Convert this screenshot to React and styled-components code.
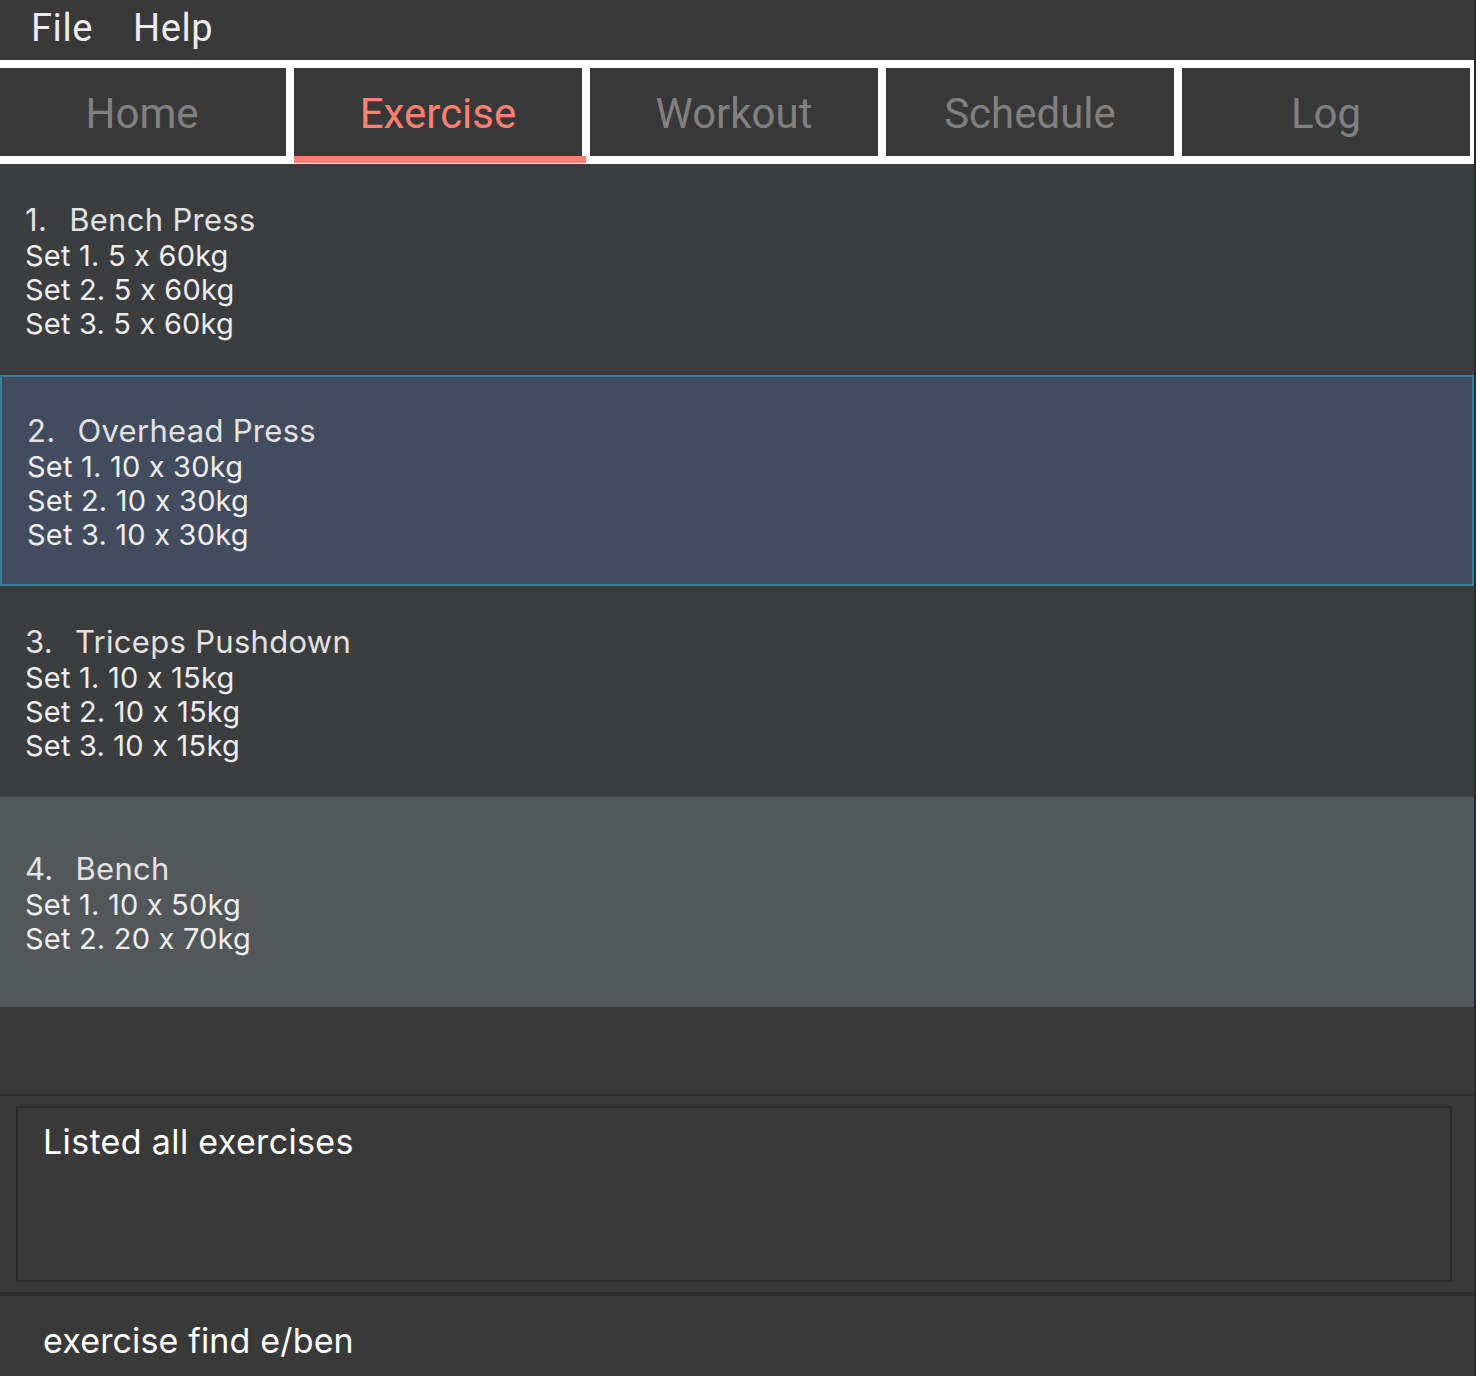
import React from 'react';
import styled, { createGlobalStyle } from 'styled-components';

const GlobalStyle = createGlobalStyle`
  html, body {
    margin: 0;
    padding: 0;
    background: #262a31;
  }
  * {
    box-sizing: border-box;
  }
`;

const Window = styled.div`
  width: 1474px;
  height: 1376px;
  display: flex;
  flex-direction: column;
  overflow: hidden;
  background: #393939;
  font-feature-settings: 'calt' 0;
`;

const MenuBar = styled.div`
  height: 60px;
  display: flex;
  align-items: center;
  gap: 40px;
  padding: 0 0 5px 31px;
  background: #393939;
`;

const MenuItem = styled.span`
  font-family: Roboto, "Liberation Sans", sans-serif;
  font-size: 38px;
  letter-spacing: 0.6px;
  color: #ececec;
`;

const TabBar = styled.div`
  display: flex;
  gap: 8px;
  margin-left: -2px;
  padding: 8px 4px 8px 0;
  background: #ffffff;
`;

const Tab = styled.div`
  position: relative;
  flex: 1;
  height: 88px;
  display: flex;
  align-items: center;
  justify-content: center;
  padding-top: 3px;
  background: #383838;
  font-family: Roboto, "Liberation Sans", sans-serif;
  font-size: 42px;
  color: ${p => (p.active ? '#fa8072' : '#808080')};

  &::after {
    content: '';
    display: ${p => (p.active ? 'block' : 'none')};
    position: absolute;
    left: 0;
    right: -4px;
    bottom: -7px;
    height: 7px;
    background: #fa8072;
  }
`;

const List = styled.div`
  height: 930px;
  display: flex;
  flex-direction: column;
  background: #383838;
`;

const Row = styled.div`
  height: ${p => (p.last ? 210 : 211)}px;
  display: flex;
  flex-direction: column;
  justify-content: center;
  padding: 2px 0 0 25px;
  background: ${p => (p.selected ? '#424c5e' : p.even ? '#52575a' : '#3c3d3f')};
  border: ${p => (p.selected ? '2px solid #3a7e97' : 'none')};
  font-family: Inter, "Noto Sans", sans-serif;
  font-feature-settings: 'calt' 0;
`;

const Title = styled.div`
  font-size: 31px;
  line-height: 38px;
  letter-spacing: 0.3px;
  color: #e2e2e2;
`;

const Num = styled.span`
  margin-right: 22px;
`;

const SetLine = styled.div`
  font-size: 29px;
  line-height: 34px;
  letter-spacing: 0.2px;
  color: #ededed;
`;

const ResultPanel = styled.div`
  border-top: 2px solid #2b2b2b;
  padding: 10px 22px 10px 16px;
  background: #393939;
`;

const ResultBox = styled.div`
  height: 176px;
  border: 2px solid #2b2b2b;
  padding: 13px 0 0 25px;
  font-family: Inter, "Noto Sans", sans-serif;
  font-size: 34px;
  line-height: 41px;
  letter-spacing: 0.35px;
  color: #ffffff;
`;

const CommandBox = styled.div`
  flex: 1;
  border-top: 4px solid #2b2b2b;
  padding: 24px 0 0 43px;
  font-family: Inter, "Noto Sans", sans-serif;
  font-size: 34px;
  line-height: 41px;
  letter-spacing: 0.15px;
  color: #ffffff;
`;

const tabs = ['Home', 'Exercise', 'Workout', 'Schedule', 'Log'];

const exercises = [
  { name: 'Bench Press', sets: ['5 x 60kg', '5 x 60kg', '5 x 60kg'] },
  { name: 'Overhead Press', sets: ['10 x 30kg', '10 x 30kg', '10 x 30kg'], selected: true },
  { name: 'Triceps Pushdown', sets: ['10 x 15kg', '10 x 15kg', '10 x 15kg'] },
  { name: 'Bench', sets: ['10 x 50kg', '20 x 70kg'] },
];

export default function App() {
  return (
    <Window>
      <GlobalStyle />
      <MenuBar>
        <MenuItem>File</MenuItem>
        <MenuItem>Help</MenuItem>
      </MenuBar>
      <TabBar>
        {tabs.map(t => (
          <Tab key={t} active={t === 'Exercise'}>{t}</Tab>
        ))}
      </TabBar>
      <List>
        {exercises.map((ex, i) => (
          <Row key={i} even={i % 2 === 1} selected={ex.selected} last={i === exercises.length - 1}>
            <Title><Num>{i + 1}.</Num>{ex.name}</Title>
            {ex.sets.map((s, j) => (
              <SetLine key={j}>Set {j + 1}. {s}</SetLine>
            ))}
          </Row>
        ))}
      </List>
      <ResultPanel>
        <ResultBox>Listed all exercises</ResultBox>
      </ResultPanel>
      <CommandBox>exercise find e/ben</CommandBox>
    </Window>
  );
}
